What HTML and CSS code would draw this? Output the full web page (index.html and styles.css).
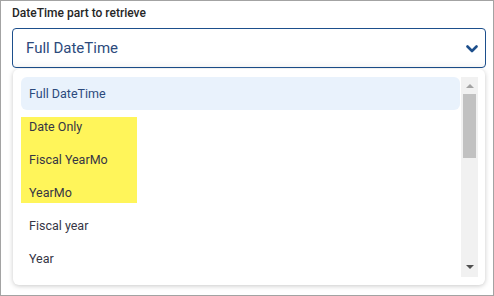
FILE: index.html
```html
<!DOCTYPE html>
<html lang="en">
<head>
  <meta charset="UTF-8" />
  <meta name="viewport" content="width=device-width, initial-scale=1.0" />
  <title>DateTime part</title>
  <link rel="stylesheet" href="styles.css">
</head>
<body>

<div class="frame">
  <div class="field-label">DateTime part to retrieve</div>

  <div class="select">
    <span class="select-value">Full DateTime</span>
    <svg class="chevron" width="12" height="8" viewBox="0 0 12 8">
      <polyline points="1.5,1.5 6,6 10.5,1.5" fill="none" stroke="#1d4f8c" stroke-width="2.6" stroke-linecap="round" stroke-linejoin="round"/>
    </svg>
  </div>

  <div class="dropdown">
    <div class="options">
      <div class="mark"></div>
      <div class="option selected">Full DateTime</div>
      <div class="option">Date Only</div>
      <div class="option">Fiscal YearMo</div>
      <div class="option">YearMo</div>
      <div class="option">Fiscal year</div>
      <div class="option">Year</div>
    </div>
    <div class="scrollbar">
      <div class="arrow up"></div>
      <div class="thumb"></div>
      <div class="arrow down"></div>
    </div>
  </div>
</div>

</body>
</html>
```

FILE: styles.css
```css
body {
  margin: 0;
  font-family: Roboto, "Liberation Sans", Arial, sans-serif;
  background: white;
}
.frame {
  width: 494px; height: 296px;
  box-sizing: border-box;
  border: 1px solid #a3a3a3;
  padding: 4px 7px 0 11px;
  overflow: hidden;
}
.field-label {
  font-size: 12px; line-height: 16px;
  font-weight: 500; color: #262626;
  margin-bottom: 7px;
}
.select {
  height: 40px; box-sizing: border-box;
  border: 1px solid #1d4f8c; border-radius: 4px;
  display: flex; align-items: center; justify-content: space-between;
  padding: 0 7px 0 13px;
  box-shadow: inset 0 -6px 8px -6px rgba(0,0,0,0.06);
}
.select-value { font-size: 15px; color: #2c4a7c; }
.chevron { margin-top: 1px; }

.dropdown {
  margin: 1px 1px 0 1px;
  height: 216px; box-sizing: border-box;
  background: white;
  border-radius: 6px;
  box-shadow: 0 1px 5px rgba(0,0,0,0.22);
  padding: 8px 7px 8px 8px;
  display: flex;
  overflow: hidden;
}
.options { flex: 1; position: relative; }
.option {
  position: relative;
  height: 33px; line-height: 33px;
  padding-left: 8px;
  font-size: 12.5px; color: #363645;
  border-radius: 6px;
}
.option.selected { background: #e9f2fc; color: #2c4a7c; }
.mark {
  position: absolute;
  left: 0; top: 40px;
  width: 116px; height: 86px;
  background: #fff55a;
}

.scrollbar {
  width: 17px; height: 200px;
  margin-left: 1px;
  background: #f1f1f1;
  display: flex; flex-direction: column; align-items: center;
}
.thumb {
  width: 13px; height: 64px;
  background: #c1c1c1;
  margin-top: 6px;
}
.arrow { width: 0; height: 0; border-left: 4px solid transparent; border-right: 4px solid transparent; }
.arrow.up { border-bottom: 4px solid #a3a3a3; margin-top: 7px; }
.arrow.down { border-top: 4px solid #505050; margin-top: auto; margin-bottom: 8px; }
```
